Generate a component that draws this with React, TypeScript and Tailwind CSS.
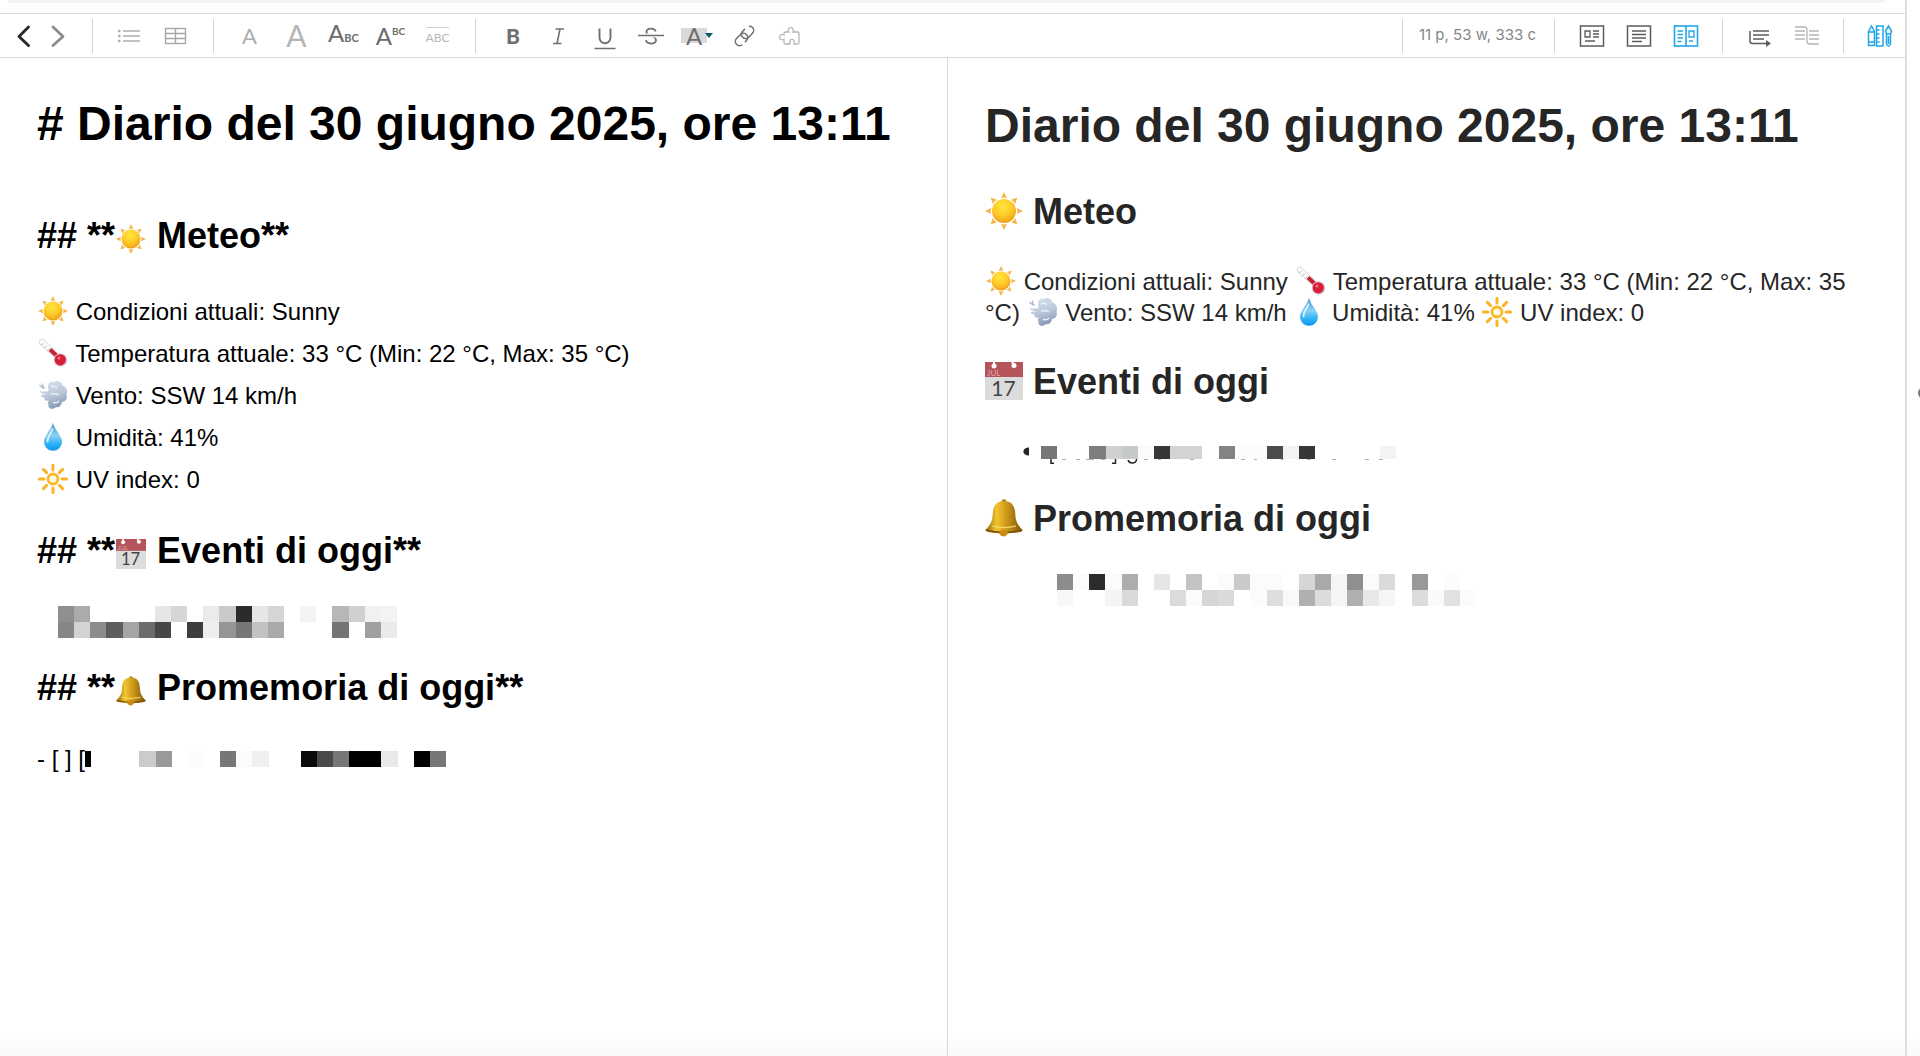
import React from "react";

type IconProps = { className: string };

// ---------- emoji ----------

function Sun({ className }: IconProps) {
  return (
    <svg viewBox="0 0 38 38" className={className} aria-label="☀️" role="img">
      <defs>
        <radialGradient id="sunFill" cx="0.45" cy="0.3" r="0.75">
          <stop offset="0" stopColor="#ffe63a" />
          <stop offset="0.55" stopColor="#ffc928" />
          <stop offset="1" stopColor="#ee9512" />
        </radialGradient>
      </defs>
      {[0, 45, 90, 135, 180, 225, 270, 315].map((a) => (
        <path key={a} d="M19 0 L22 6.2 Q19 5 16 6.2 Z" fill="#f5b548" transform={`rotate(${a} 19 19)`} />
      ))}
      <circle cx="19" cy="19" r="12" fill="url(#sunFill)" />
    </svg>
  );
}

function Brightness({ className }: IconProps) {
  return (
    <svg viewBox="0 0 30 30" className={className} aria-label="🔆" role="img">
      {[0, 45, 90, 135, 180, 225, 270, 315].map((a) => (
        <path key={a} d="M15 1.4 V6" stroke="#fbb42a" strokeWidth="3" strokeLinecap="round" transform={`rotate(${a} 15 15)`} />
      ))}
      <circle cx="15" cy="15" r="5" fill="#fffbe2" stroke="#fbb829" strokeWidth="2.8" />
    </svg>
  );
}

function Thermometer({ className }: IconProps) {
  return (
    <svg viewBox="0 0 30 30" className={className} aria-label="🌡️" role="img">
      <path d="M4 4 L20 19" stroke="#d3dae1" strokeWidth="6.4" strokeLinecap="round" />
      <path d="M4 4 L20 19" stroke="#f9fafc" strokeWidth="4.8" strokeLinecap="round" />
      <path d="M3 7.5 l2.5 -2.5 M6 10.2 l2.5 -2.5 M9 12.9 l2.5 -2.5" stroke="#a9b3bd" strokeWidth="0.9" />
      <path d="M12 11.5 L21 20" stroke="#c5202e" strokeWidth="4" />
      <circle cx="22.5" cy="22" r="6.8" fill="#dcc9d0" />
      <circle cx="22.3" cy="21.8" r="5.6" fill="#d81f35" />
      <circle cx="21" cy="20" r="1.5" fill="#f77a86" />
    </svg>
  );
}

function Wind({ className }: IconProps) {
  return (
    <svg viewBox="0 0 30 30" className={className} aria-label="💨" role="img">
      <defs>
        <linearGradient id="windFill" x1="0" y1="0" x2="0.3" y2="1">
          <stop offset="0" stopColor="#dbe4f0" />
          <stop offset="0.6" stopColor="#b9c7d9" />
          <stop offset="1" stopColor="#8b9fb8" />
        </linearGradient>
      </defs>
      <path
        d="M10 7 C9.500 3 13 0.800 16 2 C19 0 24 1.500 24.500 5.500 C28.500 6.500 30 11 28.500 14.500 C30 19 27 22 24 22 C23.500 26 20.500 28 18 27 C15 30.500 9.500 28.500 10.500 24.500 C9 23 10 21 12 20.500 C8 21.500 5.500 20 6.500 17.500 C4 17.500 2.500 16.500 3 15 L10 14 C6 14 2.500 13.500 1.500 11 C5 12 8 11.500 10.500 11 Z"
        fill="url(#windFill)"
      />
      <path d="M1.500 5 Q4 7.500 6.500 8.500 M4.500 3.500 Q4 6 6.500 8.500" stroke="#aab9cc" strokeWidth="1.300" fill="none" />
      <path d="M13 7 Q17 5 19 8 M15 22 Q18 24 21 21 M13 14 Q18 13 21 15" stroke="#e9eff7" strokeWidth="1.500" fill="none" />
    </svg>
  );
}

function Drop({ className }: IconProps) {
  return (
    <svg viewBox="0 0 30 30" className={className} aria-label="💧" role="img">
      <defs>
        <linearGradient id="dropFill" x1="0" y1="0" x2="0" y2="1">
          <stop offset="0" stopColor="#3a8fc9" />
          <stop offset="0.45" stopColor="#8ad2f5" />
          <stop offset="0.75" stopColor="#2eb2f8" />
          <stop offset="1" stopColor="#1196ee" />
        </linearGradient>
      </defs>
      <path d="M15 0.8 C16.500 8 24 13.500 24 20 A9 8.800 0 0 1 6 20 C6 13.500 13.500 8 15 0.800 Z" fill="url(#dropFill)" />
      <path d="M14.500 7 C13 12 9.500 14 9.500 19.500" stroke="#d8f1fd" strokeWidth="1.800" fill="none" strokeLinecap="round" />
    </svg>
  );
}

function Calendar({ className }: IconProps) {
  return (
    <svg viewBox="0 0 38 38" className={className} aria-label="📅" role="img">
      <rect width="38" height="38" fill="#dcdcdc" />
      <rect width="38" height="15" fill="#b5545a" />
      <circle cx="9" cy="4" r="2.500" fill="#fff" />
      <circle cx="29" cy="3.500" r="2.500" fill="#fff" />
      <path d="M9 0 V3 M27 0 L29 3" stroke="#fff" strokeWidth="2" />
      <text x="2" y="13.500" fontSize="8" fontWeight="400" fill="#e2a9ab" fontFamily="Lato, sans-serif">JUL</text>
      <text x="18.500" y="33.500" fontSize="21" fontWeight="400" fill="#444" textAnchor="middle" fontFamily="Lato, sans-serif">17</text>
    </svg>
  );
}

function Bell({ className }: IconProps) {
  return (
    <svg viewBox="0 0 38 38" className={className} aria-label="🔔" role="img">
      <defs>
        <linearGradient id="bellFill" x1="0" y1="0" x2="1" y2="0">
          <stop offset="0" stopColor="#8f6a10" />
          <stop offset="0.3" stopColor="#f0c52c" />
          <stop offset="0.55" stopColor="#d09b1a" />
          <stop offset="1" stopColor="#7d560b" />
        </linearGradient>
      </defs>
      <circle cx="19" cy="2.600" r="2.400" fill="#a87b10" />
      <path
        d="M19 2 C27.500 2 30 8 30.300 15 C30.600 23 33 26 37.500 31 C37.500 33.500 27 34.500 19 34.500 C11 34.500 0.500 33.500 0.500 31 C5 26 7.400 23 7.700 15 C8 8 10.500 2 19 2 Z"
        fill="url(#bellFill)"
      />
      <path d="M0.800 31.200 Q19 35.500 37.200 31.200" stroke="#7c5309" strokeWidth="1.600" fill="none" />
      <path d="M7 27 Q19 30 31 27" stroke="#f7dc6a" strokeWidth="1.200" fill="none" />
      <path d="M13.500 34 Q18.500 41 23.500 34 Q22 31 18.500 31 Q15 31 13.500 34" fill="#c98912" />
    </svg>
  );
}

const SMALL = "inline-block w-8 h-[30px] -my-1 align-[-2px]";
const LARGE = "inline-block w-[38px] h-[38px] -my-1 align-[-2px]";

// ---------- redacted text ----------

type Cell = [col: number, row: number, color: string];

function Mosaic({ cells, cols, rows, className }: { cells: Cell[]; cols: number; rows: number; className: string }) {
  return (
    <svg viewBox={`0 0 ${cols} ${rows}`} preserveAspectRatio="none" shapeRendering="crispEdges" className={className} aria-hidden="true">
      {cells.map(([x, y, fill]) => (
        <rect key={`${x}-${y}`} x={x} y={y} width="1" height="1" fill={fill} />
      ))}
    </svg>
  );
}

const eventCells: Cell[] = [
  [0, 0, "#8f8f8f"], [1, 0, "#ababab"], [6, 0, "#e5e7e6"], [7, 0, "#d5d7d6"], [9, 0, "#ebebeb"],
  [10, 0, "#cacaca"], [11, 0, "#2b2b2b"], [12, 0, "#e6e6e6"], [13, 0, "#d5d5d5"], [15, 0, "#f3f4f3"],
  [17, 0, "#b5b8b7"], [18, 0, "#cfd1d0"], [19, 0, "#f1f1f1"], [20, 0, "#f3f3f3"],
  [0, 1, "#868686"], [1, 1, "#d3d3d3"], [2, 1, "#8c8c8c"], [3, 1, "#5d5d5d"], [4, 1, "#a5a5a5"],
  [5, 1, "#6c6c6c"], [6, 1, "#474747"], [8, 1, "#3d3d3d"], [9, 1, "#eeeeee"], [10, 1, "#959595"],
  [11, 1, "#777777"], [12, 1, "#c2c2c2"], [13, 1, "#a9a9a9"], [17, 1, "#737473"], [19, 1, "#a0a0a0"], [20, 1, "#eaeaea"],
];

const reminderCells: Cell[] = [
  [3, 0, "#cbcbcb"], [4, 0, "#999999"], [6, 0, "#fcfcfc"], [8, 0, "#777777"], [9, 0, "#fbfbfb"],
  [10, 0, "#f0f0f0"], [13, 0, "#0a0a0a"], [14, 0, "#4a4a4a"], [15, 0, "#777777"], [16, 0, "#000000"],
  [17, 0, "#000000"], [18, 0, "#e9e9e9"], [20, 0, "#000000"], [21, 0, "#777777"],
];

const eventPreviewCells: Cell[] = [
  [0, 0, "#777777"], [3, 0, "#7e7e7e"], [4, 0, "#d0d0ce"], [5, 0, "#c5c9c8"], [6, 0, "#fbfbfb"],
  [7, 0, "#373737"], [8, 0, "#d3d4d2"], [9, 0, "#d3d4d2"], [11, 0, "#838383"], [12, 0, "#fcfcfc"],
  [13, 0, "#fcfcfc"], [14, 0, "#4c4c4c"], [15, 0, "#f3f3f3"], [16, 0, "#373737"], [21, 0, "#f3f3f3"],
];

const reminderPreviewCells: Cell[] = [
  [1, 0, "#8c8c8c"], [2, 0, "#fafbfb"], [3, 0, "#2c2c2c"], [4, 0, "#fbfbfb"], [5, 0, "#adadad"],
  [7, 0, "#e6e6e6"], [9, 0, "#c2c5c4"], [11, 0, "#fbfbfb"], [12, 0, "#cacaca"], [13, 0, "#fbfbfb"],
  [14, 0, "#fbfbfb"], [16, 0, "#d6d6d6"], [17, 0, "#a9a9a9"], [18, 0, "#f5f5f5"], [19, 0, "#8f8f8f"],
  [20, 0, "#fbfbfb"], [21, 0, "#d8dbda"], [23, 0, "#999999"], [25, 0, "#fcfcfc"],
  [1, 1, "#f8f8f6"], [4, 1, "#f4f4f4"], [5, 1, "#dadada"], [8, 1, "#dbdbdb"],
  [9, 1, "#fbfbfb"], [10, 1, "#d6d6d6"], [11, 1, "#dadada"], [13, 1, "#fcfcfc"], [14, 1, "#dedede"],
  [15, 1, "#f9f9f9"], [16, 1, "#b0b0b0"], [17, 1, "#dcdcdc"], [18, 1, "#f5f5f3"], [19, 1, "#afafaf"],
  [20, 1, "#e8e8e8"], [21, 1, "#f6f6f4"], [23, 1, "#dcdcdc"], [24, 1, "#fafafa"], [25, 1, "#e1e1df"], [26, 1, "#fbfbfb"],
];

// ---------- toolbar ----------

function Tool({ label, className, children }: { label: string; className: string; children: React.ReactNode }) {
  return (
    <button type="button" aria-label={label} title={label} className={`flex h-9 shrink-0 items-center justify-center ${className}`}>
      {children}
    </button>
  );
}

function Separator() {
  return <div className="h-[34px] w-px shrink-0 bg-[#d4d4d4]" />;
}

function Icon({ children, className }: { children: React.ReactNode; className: string }) {
  return (
    <svg viewBox="0 0 28 28" fill="none" stroke="currentColor" className={`size-7 ${className}`} aria-hidden="true">
      {children}
    </svg>
  );
}

function Toolbar() {
  return (
    <div role="toolbar" className="flex h-11 items-center border-b border-[#dadada] font-[Lato,sans-serif]">
      <div className="flex px-[7px] pr-[17px]">
        <Tool label="Indietro" className="w-[34px]">
          <Icon className="text-[#2a2a2a]"><path d="M18.500 5 L9 14.500 L18.500 23.500" strokeWidth="3" strokeLinecap="round" strokeLinejoin="round" /></Icon>
        </Tool>
        <Tool label="Avanti" className="w-[34px]">
          <Icon className="text-[#8b8b8b]"><path d="M9 5 L19 14.500 L9 23.500" strokeWidth="2.800" strokeLinecap="round" strokeLinejoin="round" /></Icon>
        </Tool>
      </div>
      <Separator />
      <div className="flex pr-[15px] pl-[13px]">
        <Tool label="Elenco" className="w-[46px]">
          <Icon className="text-[#adadad]">
            <path d="M8 9 H25 M8 14 H25 M8 19 H25" strokeWidth="1.400" />
            <path d="M3 9 H5.500 M3 14 H5.500 M3 19 H5.500" strokeWidth="2.500" />
          </Icon>
        </Tool>
        <Tool label="Tabella" className="w-[46px]">
          <Icon className="text-[#a6a6a6]">
            <rect x="4.500" y="6.500" width="20" height="15" strokeWidth="1.400" />
            <path d="M4.500 11.500 H24.500 M4.500 16.500 H24.500 M14.500 6.500 V21.500" strokeWidth="1.400" />
          </Icon>
        </Tool>
      </div>
      <Separator />
      <div className="flex pr-[14px] pl-3">
        <Tool label="Riduci carattere" className="w-[47px] text-[22px] text-[#adadad]">A</Tool>
        <Tool label="Ingrandisci carattere" className="w-[47px] text-[30px] text-[#b5b5b5]">A</Tool>
        <Tool label="Pedice" className="w-[47px] text-[#6c6c6c]">
          <span className="text-2xl leading-7">A<span className="text-[11px] font-bold">BC</span></span>
        </Tool>
        <Tool label="Apice" className="w-[47px] text-[#6c6c6c]">
          <span className="text-2xl leading-7">A<span className="align-[10px] text-[10px] leading-none font-bold">BC</span></span>
        </Tool>
        <Tool label="Sopralineato" className="w-[47px] text-[#b8b8b8]">
          <span className="border-t border-[#d0d0d0] pt-1 text-xs leading-3">ABC</span>
        </Tool>
      </div>
      <Separator />
      <div className="flex px-[14px]">
        <Tool label="Grassetto" className="w-[46px] text-[21px] font-black text-[#6f6f6f]">B</Tool>
        <Tool label="Corsivo" className="w-[46px]">
          <Icon className="text-[#707070]"><path d="M10.500 7 H19 M8 21.500 H16.500 M15 7 L12 21.500" strokeWidth="1.600" /></Icon>
        </Tool>
        <Tool label="Sottolineato" className="w-[46px]">
          <Icon className="text-[#6f6f6f]">
            <path d="M8.500 6.500 V15.500 A5.500 5.800 0 0 0 19.500 15.500 V6.500" strokeWidth="1.900" />
            <path d="M3.500 26.500 H24.500" strokeWidth="1.500" />
          </Icon>
        </Tool>
        <Tool label="Barrato" className="w-[46px]">
          <Icon className="text-[#6f6f6f]">
            <path d="M18.500 9.500 C18 5.500 9.500 5.500 9.500 10 C9.500 12 11 13 14 14 C17.500 15 19 16 19 18.200 C19 22.800 9.500 22.500 9 18.200" strokeWidth="1.800" />
            <path d="M5 13.500 H23" stroke="#fff" strokeWidth="4" />
            <path d="M1 13.500 H27" strokeWidth="1.500" />
          </Icon>
        </Tool>
        <Tool label="Evidenzia" className="w-[46px]">
          <span className="flex h-[15px] w-[26px] items-center justify-center bg-[#dadada] text-2xl text-[#6f6f6f]">A</span>
          <svg viewBox="0 0 8 5" className="-ml-0.5 h-[5px] w-2" aria-hidden="true"><path d="M0 0 H8 L4 5 Z" fill="#0b5a6b" /></svg>
        </Tool>
        <Tool label="Collegamento" className="w-[46px]">
          <Icon className="text-[#6f6f6f]">
            <path d="M13.500 15 A4 4 0 0 0 19.500 15.500 L23.500 11.300 A4.200 4.200 0 0 0 17.300 5.500 L13.300 9.700 A4 4 0 0 0 13.500 15" strokeWidth="1.500" strokeLinecap="round" strokeDasharray="22 6" strokeDashoffset="0" />
            <path d="M17.500 12.500 A4 4 0 0 0 11.500 12.500 L7.500 16.500 A4.200 4.200 0 0 0 13.700 22.300 L17.700 18.200 A4 4 0 0 0 17.500 12.500" strokeWidth="1.500" strokeLinecap="round" strokeDasharray="24 5" />
          </Icon>
        </Tool>
        <Tool label="Plugin" className="w-[46px]">
          <Icon className="text-[#b5b5b5]">
            <path
              d="M9 12.800 V11.500 Q9 10 10.500 10 H13.800 Q12.800 8.500 13.300 7.300 A2.700 2.700 0 0 1 18.300 7.300 Q18.800 8.500 17.800 10 H22.500 Q24 10 24 11.500 V20.500 Q24 22 22.500 22 H19 V19.500 A2 2 0 0 0 14.800 19.500 V22 H10.500 Q9 22 9 20.500 V17.300 Q7.500 18.300 6.300 17.700 A2.700 2.700 0 0 1 6.300 12.600 Q7.500 12 9 12.800 Z"
              strokeWidth="1.300"
            />
          </Icon>
        </Tool>
      </div>

      <div className="ml-auto flex items-center">
        <Separator />
        <div className="pr-[18px] pl-4 font-[Inter,sans-serif] text-[15px] whitespace-nowrap text-[#868686]">11 p, 53 w, 333 c</div>
        <Separator />
        <div className="flex px-[13px]">
          <Tool label="Anteprima" className="w-[47px]">
            <Icon className="text-[#5c5c5c]">
              <rect x="2.500" y="4" width="23" height="20" strokeWidth="1.500" />
              <path d="M7 9 H12 V15 H7 Z M15 9 H21 M15 12 H21 M15 15 H21 M7 19 H17" strokeWidth="1.300" />
            </Icon>
          </Tool>
          <Tool label="Editor" className="w-[47px]">
            <Icon className="text-[#5c5c5c]">
              <rect x="2.500" y="4" width="23" height="20" strokeWidth="1.500" />
              <path d="M7 9 H21 M7 12.500 H21 M7 16 H21 M7 19.500 H17" strokeWidth="1.300" />
            </Icon>
          </Tool>
          <Tool label="Vista doppia" className="w-[47px]">
            <Icon className="text-[#1ea6e6]">
              <rect x="2.500" y="4" width="23" height="20" strokeWidth="1.600" />
              <path d="M14 4 V24" strokeWidth="1.600" />
              <path d="M5.500 9 H11 M5.500 12.500 H11 M5.500 16 H11 M5.500 19.500 H9.500 M17 9 H22 V15 H17 Z M17 19 H21" strokeWidth="1.300" />
            </Icon>
          </Tool>
        </div>
        <Separator />
        <div className="flex px-[13px]">
          <Tool label="A capo automatico" className="w-[47px]">
            <Icon className="text-[#5c5c5c]">
              <path d="M4 9 V19 Q4 21.500 6.500 21.500 H20" strokeWidth="1.500" />
              <path d="M7 9 H23 M7 13 H23 M7 17 H18" strokeWidth="1.300" />
              <path d="M20 18 L25 21.500 L20 25 Z" fill="currentColor" stroke="none" />
            </Icon>
          </Tool>
          <Tool label="Scorrimento sincronizzato" className="w-[47px]">
            <Icon className="text-[#b5b5b5]">
              <path d="M2 5 H11 Q14 5 14 8 V19 Q14 22 17 22 H26" strokeWidth="1.300" />
              <path d="M2 9 H12 M2 13 H12 M2 17 H12 M16 9 H26 M16 13 H26 M16 17 H26" strokeWidth="1.300" />
            </Icon>
          </Tool>
        </div>
        <Separator />
        <Tool label="Strumenti" className="mr-0.5 ml-3 w-[47px] text-[#1ea6e6]">
          <Icon className="">
            <path d="M2.500 9.500 L5.500 4 L8.500 9.500 V23.500 H2.500 Z M2.500 10 H8.500 M2.500 20 H8.500" strokeWidth="1.500" />
            <path d="M10.500 4 H17 V24 H10.500 Z M10.500 8 H13.500 M10.500 12 H13.500 M10.500 16 H13.500 M10.500 20 H13.500" strokeWidth="1.500" />
            <path d="M19.500 9 L22.500 4 L25.500 9 L24.500 12 H20.500 Z M20.500 12 V22 Q22.500 26 24.500 22 V12 M22.500 14 V22" strokeWidth="1.500" />
          </Icon>
        </Tool>
      </div>
    </div>
  );
}

// ---------- panes ----------

const H1 = "text-5xl leading-[56px] font-bold";
const H2 = "text-4xl leading-[44px] font-bold";

function Editor() {
  return (
    <div
      role="textbox"
      aria-multiline="true"
      aria-label="Markdown"
      contentEditable
      suppressContentEditableWarning
      spellCheck={false}
      className="border-r border-[#dadada] pt-[38px] pl-[37px] text-2xl leading-[42px] text-black"
    >
      <div className={H1}># Diario del 30 giugno 2025, ore 13:11</div>
      <div className={`mt-[62px] ${H2}`}>## **<Sun className={SMALL} /> Meteo**</div>
      <div className="mt-[33px]">
        <div><Sun className={SMALL} /> Condizioni attuali: Sunny</div>
        <div><Thermometer className={SMALL} /> Temperatura attuale: 33 °C (Min: 22 °C, Max: 35 °C)</div>
        <div><Wind className={SMALL} /> Vento: SSW 14 km/h</div>
        <div><Drop className={SMALL} /> Umidità: 41%</div>
        <div><Brightness className={SMALL} /> UV index: 0</div>
      </div>
      <div className={`mt-7 ${H2}`}>## **<Calendar className={SMALL} /> Eventi di oggi**</div>
      <Mosaic cells={eventCells} cols={21} rows={2} className="mt-[33px] ml-[21px] h-8 w-[339px]" />
      <div className={`mt-7 ${H2}`}>## **<Bell className={SMALL} /> Promemoria di oggi**</div>
      <div className="mt-7 flex items-center">
        <span>- [ ] [</span>
        <span className="h-4 w-[6px] bg-black" />
        <Mosaic cells={reminderCells} cols={22} rows={1} className="h-4 w-[355px]" />
      </div>
    </div>
  );
}

function Preview() {
  return (
    <article className="px-[37px] pt-10 text-2xl leading-[31px] text-[#262626]">
      <h1 className={H1}>Diario del 30 giugno 2025, ore 13:11</h1>
      <h2 className={`mt-9 ${H2}`}><Sun className={LARGE} /> Meteo</h2>
      <p className="mt-8">
        <Sun className={SMALL} /> Condizioni attuali: Sunny <Thermometer className={SMALL} /> Temperatura attuale: 33 °C (Min: 22 °C, Max: 35 °C){" "}
        <Wind className={SMALL} /> Vento: SSW 14 km/h <Drop className={SMALL} /> Umidità: 41% <Brightness className={SMALL} /> UV index: 0
      </p>
      <h2 className={`mt-8 ${H2}`}><Calendar className={LARGE} /> Eventi di oggi</h2>
      <ul className="mt-[42px] pl-[38px]">
        <li className="flex items-start">
          <svg viewBox="0 0 18 13" className="h-[13px] w-[18px]" aria-hidden="true"><path d="M6 1.500 C-1.500 1.500 -1.500 9.500 6 9.500 Z" fill="#262626" /></svg>
          <div>
            <Mosaic cells={eventPreviewCells} cols={22} rows={1} className="h-[13px] w-[355px]" />
            {/* leftovers of the line below the redaction */}
            <svg viewBox="0 0 355 5" className="h-[5px] w-[355px]" fill="none" stroke="#262626" strokeWidth="1.500" aria-hidden="true">
              <path d="M10 0 V4.200 H13 M71 4.200 H74.500 V0 M87 1 Q88 4 91 4 Q95.500 4 95.500 0" />
              <path d="M21 0.500 H25 M35 0.500 H39 M45 0.500 H53 M60 0.500 H64 M103 0.500 H107 M117 0.500 H120 M149 0.500 H153 M200 0.500 H204 M213 0.500 H216 M240 0.500 H243 M266 0.500 H270 M291 0.500 H295 M324 0.500 H328 M338 0.500 H342" stroke="#b0b0b0" strokeWidth="1" />
            </svg>
          </div>
        </li>
      </ul>
      <h2 className={`mt-[33px] ${H2}`}><Bell className={LARGE} /> Promemoria di oggi</h2>
      <Mosaic cells={reminderPreviewCells} cols={27} rows={2} className="mt-[33px] ml-14 h-8 w-[435px]" />
    </article>
  );
}

export default function App() {
  return (
    <div className="flex min-h-screen overflow-hidden bg-[linear-gradient(to_top,#fafafa,#fff_24px)] font-['Liberation_Sans',Arial,sans-serif]">
      <div className="flex min-w-0 flex-1 flex-col border-r-2 border-[#dedede]">
        <div className="mr-5 ml-2 h-[3px] rounded-b-md bg-[#f3f3f3]" />
        <div className="mt-[10px] border-t border-[#dadada]">
          <Toolbar />
        </div>
        <div className="grid flex-1 grid-cols-[948fr_957fr]">
          <Editor />
          <Preview />
        </div>
      </div>
      <div className="flex w-[13px] items-start justify-end overflow-hidden pt-[387px]">
        <span className="-mr-[10px] size-3 shrink-0 rounded-full bg-[#777]" />
      </div>
    </div>
  );
}
